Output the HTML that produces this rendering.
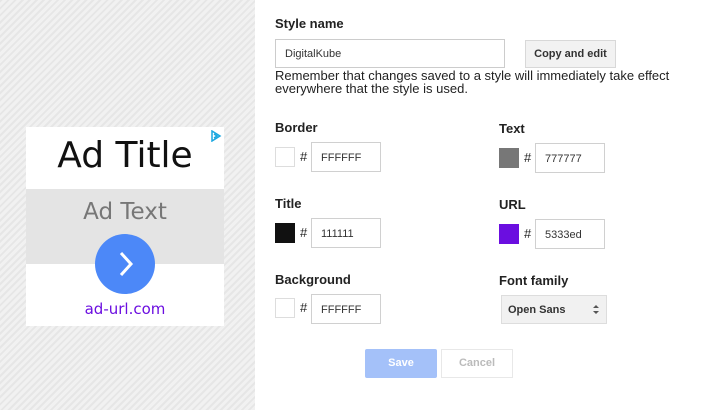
<!DOCTYPE html>
<html><head><style>
body{margin:0;width:720px;height:410px;position:relative;font-family:"Liberation Sans",Arial,sans-serif;background:#fff;overflow:hidden}
.left{position:absolute;left:0;top:0;width:255px;height:410px;background:repeating-linear-gradient(135deg,#e6e6e6 0 2px,#f1f1f1 2px 5px)}
.ad{position:absolute;left:26px;top:127px;width:198px;height:199px;background:#fff}
.a{position:absolute}
.lbl{position:absolute;font-size:13px;font-weight:bold;color:#222}
.sw{position:absolute;width:20px;height:20px;border:1px solid #ddd;box-sizing:border-box}
.hash{position:absolute;font-size:13px;color:#222}
.inp{position:absolute;width:70px;height:30px;border:1px solid #d0d0d0;box-sizing:border-box;font-size:11px;color:#333;padding:9px 0 0 9px}
</style></head><body>
<div class="left"><div class="ad">
<div class="a" style="left:0;top:62px;width:198px;height:75px;background:#e4e4e4"></div>
<div class="a" style="left:0;top:8px;width:198px;text-align:center;font-family:'DejaVu Sans',sans-serif;font-size:36px;color:#111">Ad Title</div>
<div class="a" style="left:0;top:72px;width:198px;text-align:center;font-family:'DejaVu Sans',sans-serif;font-size:23px;color:#777">Ad Text</div>
<div class="a" style="left:69px;top:107px;width:60px;height:60px;border-radius:50%;background:#4c88f8"></div>
<svg class="a" style="left:69px;top:107px" width="60" height="60"><path d="M26 19 L36 30 L26 41" stroke="#fff" stroke-width="3" fill="none"/></svg>
<div class="a" style="left:0;top:173px;width:198px;text-align:center;font-family:'DejaVu Sans',sans-serif;font-size:15px;color:#6b0ee0">ad-url.com</div>
<svg class="a" style="left:184px;top:3px" width="12" height="12"><path d="M2 1 L10 6 L2 11 Z M4 4 L7 6 L4 8" stroke="#1aa7e0" stroke-width="1.5" fill="none"/></svg>
</div></div>
<div class="lbl" style="left:275px;top:16px">Style name</div>
<div class="a" style="left:275px;top:39px;width:230px;height:29px;border:1px solid #ccc;box-sizing:border-box;font-size:11px;color:#333;padding:8px 0 0 9px">DigitalKube</div>
<div class="a" style="left:525px;top:40px;width:91px;height:28px;border:1px solid #d8d8d8;background:#f2f2f2;box-sizing:border-box;font-size:11px;font-weight:bold;color:#333;text-align:center;line-height:27px">Copy and edit</div>
<div class="a" style="left:275px;top:69px;font-size:13px;line-height:13px;color:#222;width:440px">Remember that changes saved to a style will immediately take effect everywhere that the style is used.</div>

<div class="lbl" style="left:275px;top:120px">Border</div>
<div class="sw" style="left:275px;top:147px"></div><div class="hash" style="left:300px;top:149px">#</div><div class="inp" style="left:311px;top:142px">FFFFFF</div>
<div class="lbl" style="left:499px;top:121px">Text</div>
<div class="sw" style="left:499px;top:148px;background:#777;border-color:#777"></div><div class="hash" style="left:524px;top:150px">#</div><div class="inp" style="left:535px;top:143px">777777</div>

<div class="lbl" style="left:275px;top:196px">Title</div>
<div class="sw" style="left:275px;top:223px;background:#111;border-color:#111"></div><div class="hash" style="left:300px;top:225px">#</div><div class="inp" style="left:311px;top:218px">111111</div>
<div class="lbl" style="left:499px;top:197px">URL</div>
<div class="sw" style="left:499px;top:224px;background:#6b0ee0;border-color:#6b0ee0"></div><div class="hash" style="left:524px;top:226px">#</div><div class="inp" style="left:535px;top:219px">5333ed</div>

<div class="lbl" style="left:275px;top:272px">Background</div>
<div class="sw" style="left:275px;top:298px"></div><div class="hash" style="left:300px;top:300px">#</div><div class="inp" style="left:311px;top:294px">FFFFFF</div>
<div class="lbl" style="left:499px;top:273px">Font family</div>
<div class="a" style="left:501px;top:295px;width:106px;height:29px;border:1px solid #ddd;background:#f1f1f1;box-sizing:border-box;font-size:11px;font-weight:bold;color:#333;padding:8px 0 0 6px">Open Sans</div>
<svg class="a" style="left:592px;top:304px" width="8" height="11"><path d="M1 4 L4 1 L7 4 Z M1 7 L4 10 L7 7 Z" fill="#555"/></svg>

<div class="a" style="left:365px;top:349px;width:72px;height:29px;background:#a4c1f9;border-radius:2px;color:#fff;font-size:11px;font-weight:bold;text-align:center;line-height:29px">Save</div>
<div class="a" style="left:441px;top:349px;width:72px;height:29px;border:1px solid #e8e8e8;box-sizing:border-box;color:#bbb;font-size:11px;font-weight:bold;text-align:center;line-height:27px">Cancel</div>
</body></html>
